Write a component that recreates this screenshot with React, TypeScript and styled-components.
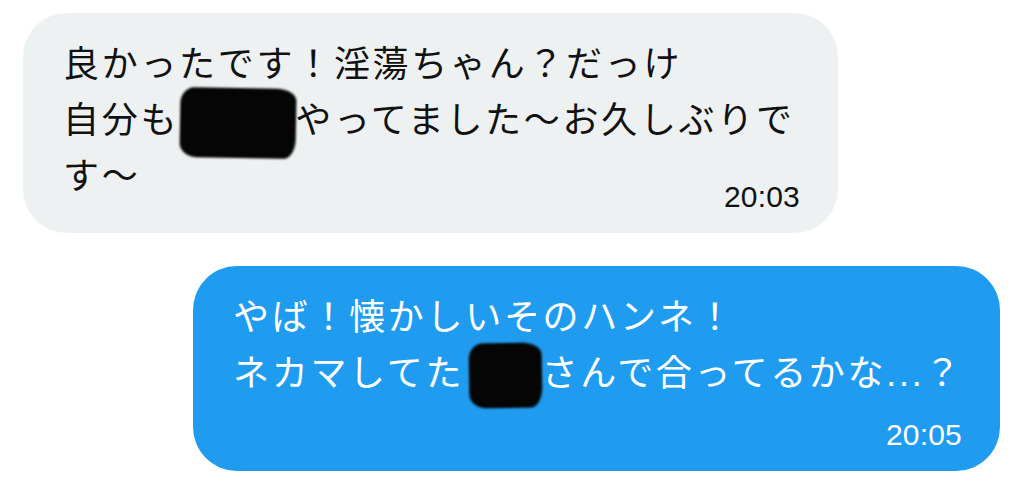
import React from "react";
import styled, { createGlobalStyle } from "styled-components";

const GlobalStyle = createGlobalStyle`
  html, body {
    margin: 0;
    padding: 0;
    background: #ffffff;
  }
  body {
    font-family: "Liberation Sans", "Noto Sans CJK JP", sans-serif;
  }
`;

const Page = styled.main`
  width: 1024px;
  height: 485px;
  box-sizing: border-box;
  padding: 13px 24px 0 23px;
  display: flex;
  flex-direction: column;
  gap: 33px;
  overflow: hidden;
`;

const Bubble = styled.div<{ $sent?: boolean; $width: number }>`
  align-self: ${(p) => (p.$sent ? "flex-end" : "flex-start")};
  width: ${(p) => p.$width}px;
  box-sizing: border-box;
  padding: 24px 38px 21px 40px;
  border-radius: 44px;
  background: ${(p) => (p.$sent ? "#1f9cf0" : "#eef1f2")};
  color: ${(p) => (p.$sent ? "#ffffff" : "#111111")};
  display: flex;
  flex-direction: column;
`;

const Line = styled.div`
  font-family: "Liberation Sans", "Noto Sans CJK JP", sans-serif;
  font-size: 36px;
  line-height: 56px;
  letter-spacing: 2.7px;
  white-space: nowrap;
`;

const Redact = styled.span<{ $top: number; $bottom: number; $left: number; $right: number; $tilt: number }>`
  position: relative;
  color: transparent;
  &::before {
    content: "";
    position: absolute;
    top: ${(p) => p.$top}px;
    bottom: ${(p) => p.$bottom}px;
    left: ${(p) => p.$left}px;
    right: ${(p) => p.$right}px;
    background: #050505;
    border-radius: 14px 20px 12px 18px / 16px 12px 20px 14px;
    transform: rotate(${(p) => p.$tilt}deg);
    filter: blur(1.3px);
  }
`;

const Time = styled.div<{ $gap: number }>`
  margin-top: ${(p) => p.$gap}px;
  align-self: flex-end;
  font-family: "Liberation Sans", "Helvetica", sans-serif;
  font-size: 30px;
  line-height: 30px;
  letter-spacing: 0.2px;
`;

export default function App() {
  return (
    <>
      <GlobalStyle />
      <Page>
        <Bubble $width={815}>
          <Line>良かったです！淫蕩ちゃん？だっけ</Line>
          <Line>
            自分も
            <Redact $top={-12} $bottom={-17} $left={1} $right={-1} $tilt={1}>
              {"\u3000\u3000\u3000"}
            </Redact>
            やってました〜お久しぶりで
          </Line>
          <Line>す〜</Line>
          <Time $gap={-23}>20:03</Time>
        </Bubble>
        <Bubble $sent $width={807}>
          <Line>やば！懐かしいそのハンネ！</Line>
          <Line>
            ネカマしてた
            <Redact $top={-10} $bottom={-14} $left={5} $right={-1} $tilt={-1}>
              {"\u3000\u3000"}
            </Redact>
            さんで合ってるかな...？
          </Line>
          <Time $gap={18}>20:05</Time>
        </Bubble>
      </Page>
    </>
  );
}
